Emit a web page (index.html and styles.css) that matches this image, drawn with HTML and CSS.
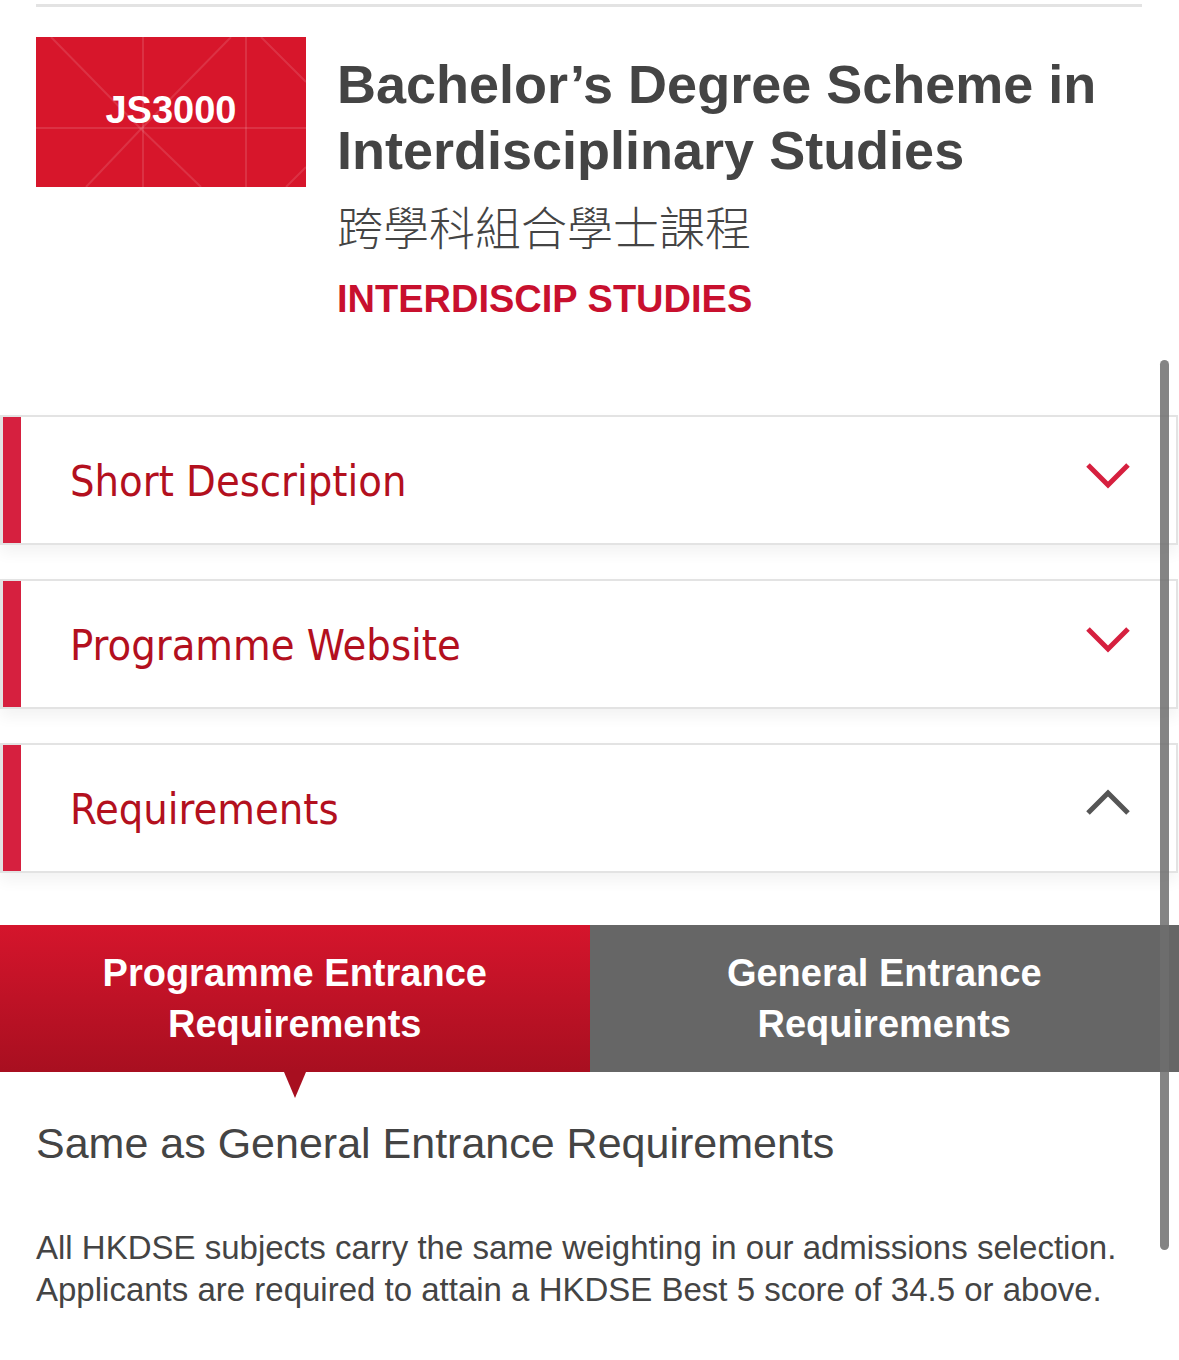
FILE: index.html
```html
<!DOCTYPE html>
<html lang="en">
<head>
    <meta charset="UTF-8">
    <meta name="viewport" content="width=device-width, initial-scale=1.0">
    <title>JS3000 - Interdisciplinary Studies</title>
    <link rel="stylesheet" href="styles.css">
</head>
<body>
    <div class="top-rule"></div>

    <div class="programme">
        <div class="code-box">
            <svg class="code-pattern" viewBox="0 0 270 150" preserveAspectRatio="none">
                <line x1="107" y1="0" x2="107" y2="150" />
                <line x1="210" y1="0" x2="210" y2="150" />
                <line x1="0" y1="91" x2="270" y2="91" />
                <line x1="15" y1="0" x2="105" y2="92" />
                <line x1="105" y1="92" x2="195" y2="0" />
                <line x1="105" y1="92" x2="50" y2="150" />
                <line x1="105" y1="92" x2="165" y2="150" />
                <line x1="225" y1="0" x2="270" y2="45" />
                <line x1="250" y1="150" x2="270" y2="130" />
            </svg>
            <span class="code">JS3000</span>
        </div>
        <div class="programme-info">
            <h1 class="title-en">Bachelor’s Degree Scheme in Interdisciplinary Studies</h1>
            <div class="title-zh">跨學科組合學士課程</div>
            <div class="short-name">INTERDISCIP STUDIES</div>
        </div>
    </div>

    <div class="accordion">
        <div class="acc-item">
            <span class="acc-title">Short Description</span>
            <svg class="chevron down" viewBox="0 0 46 30"><polyline points="3,5 23,25 43,5" /></svg>
        </div>
        <div class="acc-item">
            <span class="acc-title">Programme Website</span>
            <svg class="chevron down" viewBox="0 0 46 30"><polyline points="3,5 23,25 43,5" /></svg>
        </div>
        <div class="acc-item">
            <span class="acc-title">Requirements</span>
            <svg class="chevron up" viewBox="0 0 46 30"><polyline points="3,25 23,5 43,25" /></svg>
        </div>
    </div>

    <div class="tabs">
        <div class="tab active">Programme Entrance<br>Requirements</div>
        <div class="tab">General Entrance<br>Requirements</div>
    </div>

    <div class="tab-content">
        <p class="lead">Same as General Entrance Requirements</p>
        <p class="note">All HKDSE subjects carry the same weighting in our admissions selection. Applicants are required to attain a HKDSE Best 5 score of 34.5 or above.</p>
    </div>

    <div class="scrollbar"></div>
</body>
</html>
```

FILE: styles.css
```css
body {
    margin: 0;
    background: #fff;
    font-family: 'Liberation Sans', Arial, sans-serif;
    color: #444;
    position: relative;
    min-height: 1360px;
}

.top-rule {
    height: 3px;
    background: #e3e3e3;
    margin: 4px 37px 0 36px;
}

.programme {
    display: flex;
    gap: 31px;
    padding: 30px 36px 0 36px;
}

.code-box {
    flex: 0 0 270px;
    height: 150px;
    background: #d7162b;
    position: relative;
    display: flex;
    align-items: center;
    justify-content: center;
}

.code-pattern {
    position: absolute;
    inset: 0;
    width: 100%;
    height: 100%;
}

.code-pattern line {
    stroke: rgba(255, 255, 255, 0.12);
    stroke-width: 2;
}

.code {
    position: relative;
    color: #fff;
    font-weight: bold;
    font-size: 38px;
    margin-top: -3px;
}

.programme-info {
    padding-top: 14px;
}

.title-en {
    margin: 0;
    font-size: 54px;
    line-height: 66px;
    font-weight: bold;
    color: #444;
}

.title-zh {
    font-family: 'Noto Sans CJK TC', sans-serif;
    font-weight: 300;
    font-size: 46px;
    line-height: 72px;
    margin-top: 6px;
    color: #444;
}

.short-name {
    color: #c8102e;
    font-weight: bold;
    font-size: 38px;
    line-height: 70px;
    margin-top: 3px;
}

.accordion {
    display: flex;
    flex-direction: column;
    gap: 34px;
    margin-top: 81px;
    margin-right: 1px;
}

.acc-item {
    height: 126px;
    border: 2px solid #e3e3e3;
    border-left: 3px solid #e3e3e3;
    box-shadow: 0 8px 14px rgba(0, 0, 0, 0.05);
    display: flex;
    align-items: center;
    position: relative;
    padding-left: 67px;
    padding-right: 45px;
}

.acc-item::before {
    content: "";
    position: absolute;
    left: 0;
    top: 0;
    bottom: 0;
    width: 18px;
    background: #d6203f;
}

.acc-title {
    flex: 1;
    font-family: 'DejaVu Sans Condensed', 'DejaVu Sans', sans-serif;
    font-size: 43px;
    color: #b3101e;
    margin-top: 2px;
}

.chevron {
    width: 46px;
    height: 30px;
    margin-top: -10px;
}

.chevron polyline {
    fill: none;
    stroke-width: 5;
}

.chevron.down polyline {
    stroke: #d6203f;
}

.chevron.up polyline {
    stroke: #555;
}

.tabs {
    display: flex;
    margin-top: 52px;
    height: 147px;
}

.tab {
    flex: 1;
    display: flex;
    align-items: center;
    justify-content: center;
    text-align: center;
    color: #fff;
    font-weight: bold;
    font-size: 38px;
    line-height: 51px;
    background: #666;
    position: relative;
}

.tab.active {
    background: linear-gradient(#d5152c, #a80f20);
}

.tab.active::after {
    content: "";
    position: absolute;
    top: 100%;
    left: 50%;
    margin-left: -11px;
    border-left: 11px solid transparent;
    border-right: 11px solid transparent;
    border-top: 26px solid #a80f20;
}

.tab-content {
    padding: 0 36px;
}

.lead {
    font-size: 43px;
    margin: 45px 0 0 0;
    line-height: 52px;
}

.note {
    font-size: 33px;
    line-height: 42px;
    margin: 58px 0 0 0;
}

.scrollbar {
    position: absolute;
    left: 1160px;
    top: 360px;
    width: 9px;
    height: 890px;
    border-radius: 5px;
    background: rgba(110, 110, 110, 0.85);
}
```
